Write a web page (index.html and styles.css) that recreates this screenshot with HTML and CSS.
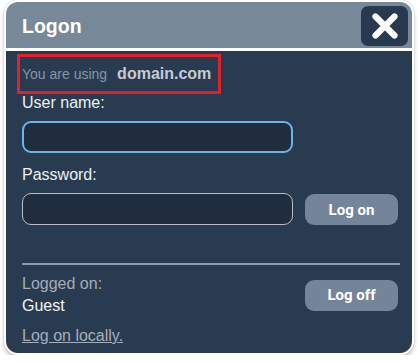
FILE: index.html
```html
<!DOCTYPE html>
<html>
<head>
<meta charset="utf-8">
<link rel="stylesheet" href="styles.css">
</head>
<body>
<div class="panel">
  <div class="header">
    <div class="title">Logon</div>
    <button class="close" aria-label="Close">
      <svg width="26" height="26" viewBox="0 0 26 26"><path d="M3.5 3.5 L22.5 22.5 M22.5 3.5 L3.5 22.5" stroke="#fff" stroke-width="6.2" stroke-linecap="round"/></svg>
    </button>
  </div>
  <div class="content">
    <div class="notice"><span class="using">You are using</span><span class="domain">domain.com</span></div>
    <label class="label">User name:</label>
    <input class="field field-focus" type="text">
    <label class="label label-pw">Password:</label>
    <div class="row">
      <input class="field" type="password">
      <button class="btn">Log on</button>
    </div>
    <div class="divider"></div>
    <div class="info">
      <div class="who">
        <div class="muted">Logged on:</div>
        <div class="user">Guest</div>
      </div>
      <button class="btn">Log off</button>
    </div>
    <a class="local" href="#">Log on locally.</a>
  </div>
</div>
</body>
</html>
```

FILE: styles.css
```css
html, body {
  margin: 0;
  padding: 0;
  background: #fff;
}
body {
  font-family: "Liberation Sans", Arial, sans-serif;
}
.panel {
  margin: 0 0 0 4px;
  width: 406px;
  border: 2px solid #fff;
  border-radius: 14px;
  overflow: hidden;
  box-shadow: 0 0 1px rgba(0,0,0,0.45), 0 3px 4px rgba(0,0,0,0.22);
}
.header {
  height: 46px;
  background: #778899;
  border-bottom: 3px solid #fff;
  display: flex;
  justify-content: space-between;
  align-items: flex-start;
  padding: 0 4px 0 16px;
}
.title {
  color: #fff;
  font-weight: 700;
  font-size: 19.5px;
  line-height: 22px;
  margin-top: 13px;
}
.close {
  margin-top: 4px;
  width: 47px;
  height: 40px;
  border: none;
  border-radius: 7px;
  background: #283a50;
  padding: 0;
  display: flex;
  align-items: center;
  justify-content: center;
}
.content {
  background: #293b51;
  padding: 3px 12px 6px 16px;
  display: flex;
  flex-direction: column;
}
.notice {
  margin-left: -5px;
  width: fit-content;
  height: 34px;
  border: 3px solid #e2222b;
  padding: 0 7px 0 2px;
  line-height: 34px;
  display: flex;
  align-items: baseline;
}
.using {
  color: #8796a7;
  font-size: 14px;
}
.domain {
  color: #c6cbd2;
  font-size: 16px;
  font-weight: 700;
  margin-left: 10px;
}
.label {
  display: block;
  color: #eef0f2;
  font-size: 16px;
  line-height: 18px;
}
.label-pw {
  margin-top: 13px;
}
.field {
  box-sizing: border-box;
  width: 271px;
  height: 32px;
  margin: 9px 0 0 0;
  border: 1px solid #b9bec5;
  border-radius: 9px;
  background: #1f2d3e;
  outline: none;
  padding: 0 8px;
}
.field-focus {
  border: 2px solid #6db5e7;
}
.row {
  display: flex;
  align-items: flex-start;
  gap: 12px;
}
.row .btn {
  margin-top: 10px;
}
.btn {
  width: 93px;
  height: 31px;
  border: none;
  border-radius: 9px;
  background: #748499;
  color: #fff;
  font-family: Roboto, "Liberation Sans", sans-serif;
  font-weight: 700;
  font-size: 15px;
  padding: 0;
}
.divider {
  margin-top: 38px;
  height: 2px;
  background: #8e9aa9;
}
.info {
  margin-top: 8px;
  display: flex;
  justify-content: space-between;
  align-items: center;
  padding-right: 2px;
}
.who {
  font-size: 16px;
  line-height: 22px;
}
.muted {
  color: #a3adb9;
}
.user {
  color: #f4f5f6;
}
.local {
  margin-top: 8px;
  align-self: flex-start;
  color: #a5afbc;
  font-size: 16px;
  line-height: 22px;
  text-decoration: underline;
}
```
